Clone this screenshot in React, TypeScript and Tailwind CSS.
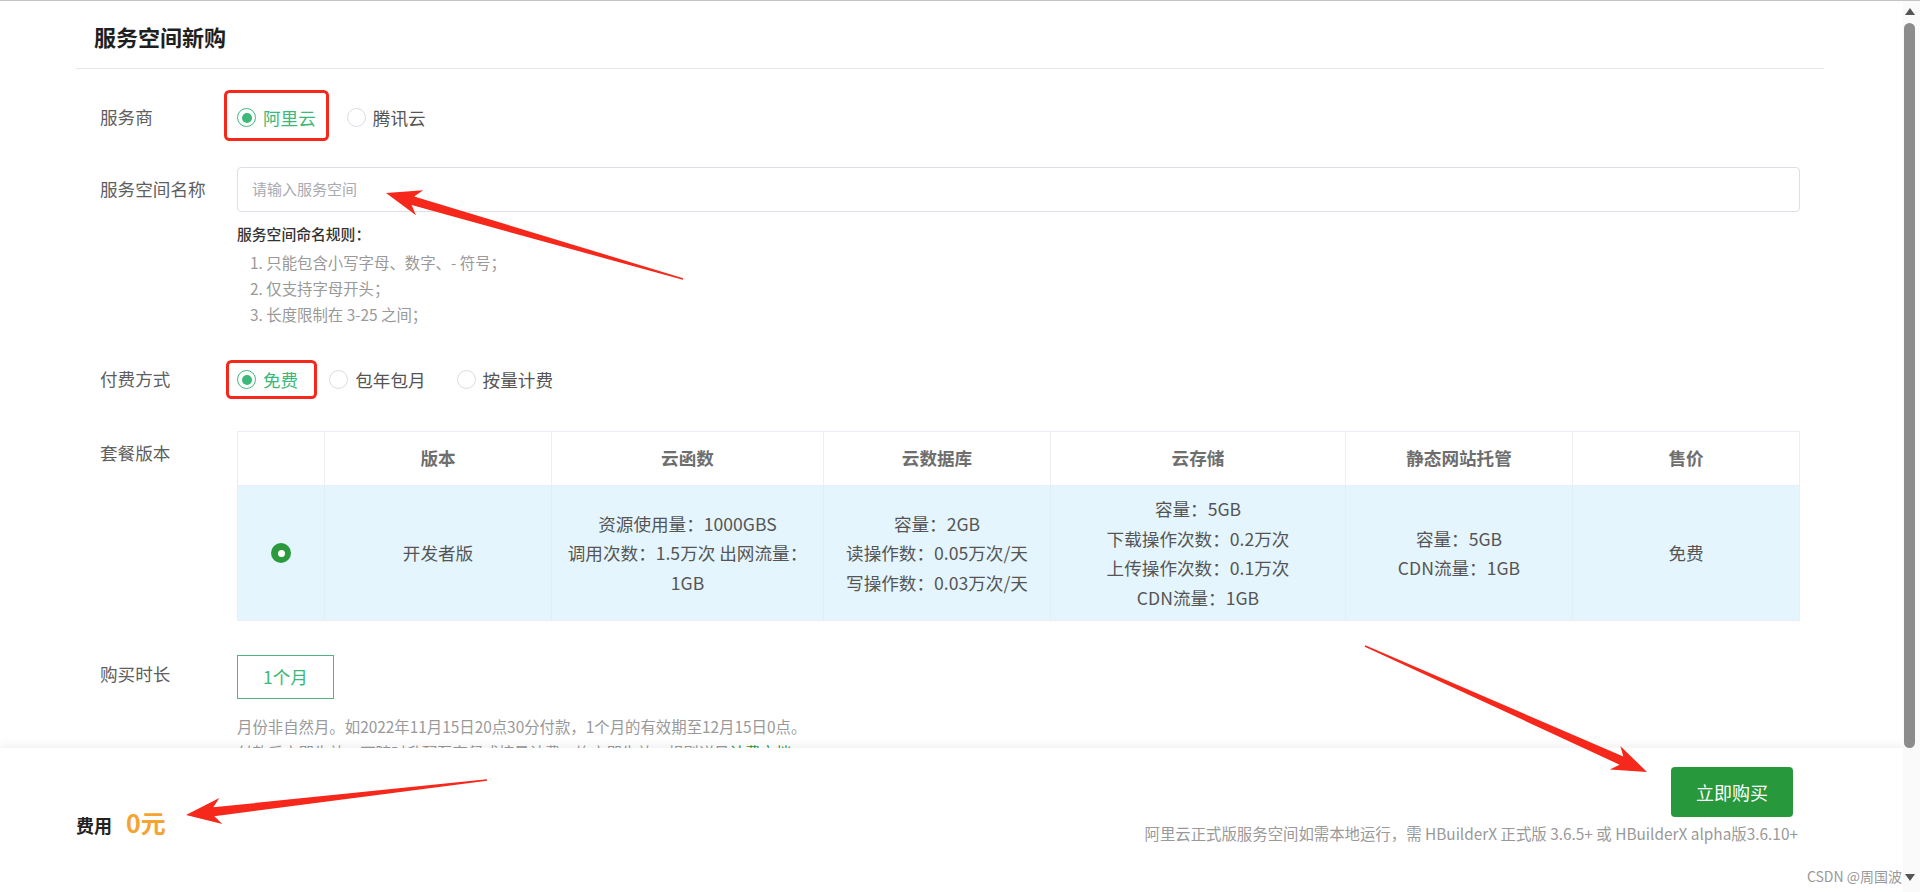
import React from 'react';

type Pt = [number, number];

// red annotation arrow: thin tail, widening shaft, notched head
function arrowPath(tail: Pt, head: Pt, headLen = 35, headW = 13, shaftW = 4.5) {
  const [tx, ty] = tail;
  const [hx, hy] = head;
  const len = Math.hypot(hx - tx, hy - ty);
  const ux = (hx - tx) / len;
  const uy = (hy - ty) / len;
  const nx = -uy;
  const ny = ux;
  const bx = hx - ux * headLen;
  const by = hy - uy * headLen;
  const jx = bx + ux * 7;
  const jy = by + uy * 7;
  const pts: Pt[] = [
    [tx + nx * 0.8, ty + ny * 0.8],
    [jx + nx * shaftW, jy + ny * shaftW],
    [bx + nx * headW, by + ny * headW],
    [hx, hy],
    [bx - nx * headW, by - ny * headW],
    [jx - nx * shaftW, jy - ny * shaftW],
    [tx - nx * 0.8, ty - ny * 0.8],
  ];
  return pts.map((p) => p.map((v) => v.toFixed(1)).join(',')).join(' ');
}

function Radio({ label, checked }: { label: string; checked?: boolean }) {
  return (
    <div className="flex items-center mr-[31px]">
      <span
        className={`flex items-center justify-center w-[19px] h-[19px] rounded-full border ${
          checked ? 'border-[#3cb878]' : 'border-[#d9dce3]'
        }`}
      >
        {checked && <span className="w-[10px] h-[10px] rounded-full bg-[#3cb878]" />}
      </span>
      <span className={`ml-[7px] text-[17.6px] leading-[26px] ${checked ? 'text-[#3cb878]' : 'text-[#555]'}`}>
        {label}
      </span>
    </div>
  );
}

const headers = ['', '版本', '云函数', '云数据库', '云存储', '静态网站托管', '售价'];

const cells: string[][] = [
  ['开发者版'],
  ['资源使用量：1000GBS', '调用次数：1.5万次 出网流量：', '1GB'],
  ['容量：2GB', '读操作数：0.05万次/天', '写操作数：0.03万次/天'],
  ['容量：5GB', '下载操作次数：0.2万次', '上传操作次数：0.1万次', 'CDN流量：1GB'],
  ['容量：5GB', 'CDN流量：1GB'],
  ['免费'],
];

function PlanTable() {
  const cols = 'grid grid-cols-[86px_227px_272px_227px_295px_227px_1fr]';
  return (
    <div className="border border-[#ebeef5]">
      <div className={`${cols} h-[54px] bg-white border-b border-[#ebeef5]`}>
        {headers.map((h, i) => (
          <div
            key={i}
            className={`flex items-center justify-center text-[17.6px] font-bold text-[#6e6e6e] ${
              i > 0 ? 'border-l border-[#ebeef5]' : ''
            }`}
          >
            {h}
          </div>
        ))}
      </div>
      <div className={`${cols} h-[134px] bg-[#e5f5fd]`}>
        <div className="flex items-center justify-center">
          <span className="flex items-center justify-center w-[20px] h-[20px] rounded-full bg-[#2a9a3d]">
            <span className="w-[7px] h-[7px] rounded-full bg-white" />
          </span>
        </div>
        {cells.map((lines, i) => (
          <div
            key={i}
            className="flex flex-col items-center justify-center border-l border-[#e3edf3] text-[17.6px] leading-[29.5px] text-[#555]"
          >
            {lines.map((l, j) => (
              <span key={j}>{l}</span>
            ))}
          </div>
        ))}
      </div>
    </div>
  );
}

export default function App() {
  return (
    <div className="relative flex h-[892px] w-[1920px] overflow-hidden border-t border-[#c4c4c4] bg-white font-['Noto_Sans_CJK_SC',sans-serif]">
      <div className="relative flex-1 overflow-hidden">
        <div className="ml-[76px] mr-[79px]">
          {/* title */}
          <div className="pt-[20px] pb-[17px] pl-[18px] border-b border-[#e8e8e8]">
            <h1 className="text-[22px] leading-[30px] font-bold text-[#1f1f1f]">服务空间新购</h1>
          </div>

          <div className="px-[24px]">
            {/* provider */}
            <div className="flex items-center mt-[30px] h-[37px]">
              <div className="w-[137px] text-[17.6px] text-[#5e5e5e]">服务商</div>
              <div className="flex items-center">
                <Radio label="阿里云" checked />
                <Radio label="腾讯云" />
              </div>
            </div>

            {/* name */}
            <div className="flex mt-[31px]">
              <div className="w-[137px] h-[45px] flex items-center text-[17.6px] text-[#5e5e5e]">服务空间名称</div>
              <div className="flex-1">
                <div className="h-[45px] flex items-center pl-[14px] border border-[#dcdfe6] rounded-[4px] text-[15px] text-[#a8abb2]">
                  请输入服务空间
                </div>
                <div className="mt-[9px] text-[14.8px] leading-[26px] font-medium text-[#333]">服务空间命名规则：</div>
                <div className="mt-[2px] pl-[13px] text-[15.4px] leading-[26px] text-[#999]">
                  <div>1. 只能包含小写字母、数字、- 符号；</div>
                  <div>2. 仅支持字母开头；</div>
                  <div>3. 长度限制在 3-25 之间；</div>
                </div>
              </div>
            </div>

            {/* payment */}
            <div className="flex items-center mt-[34px] h-[37px]">
              <div className="w-[137px] text-[17.6px] text-[#5e5e5e]">付费方式</div>
              <div className="flex items-center">
                <Radio label="免费" checked />
                <Radio label="包年包月" />
                <Radio label="按量计费" />
              </div>
            </div>

            {/* plan */}
            <div className="flex mt-[33px]">
              <div className="w-[137px] h-[44px] flex items-center text-[17.6px] text-[#5e5e5e]">套餐版本</div>
              <div className="flex-1">
                <PlanTable />
              </div>
            </div>

            {/* duration */}
            <div className="flex mt-[34px]">
              <div className="w-[137px] leading-[38px] text-[17.6px] text-[#5e5e5e]">购买时长</div>
              <div className="flex-1">
                <div className="w-[97px] h-[44px] flex items-center justify-center border border-[#4fb47f] text-[17.6px] text-[#3cb878]">
                  1个月
                </div>
                <div className="mt-[14px] text-[15.4px] leading-[26px] text-[#999]">
                  <div>月份非自然月。如2022年11月15日20点30分付款，1个月的有效期至12月15日0点。</div>
                  <div>
                    付款后立即生效，可随时升配至套餐或按量计费，均立即生效，规则详见
                    <span className="text-[#2a9a3d]">计费文档</span>
                  </div>
                </div>
              </div>
            </div>
          </div>
        </div>

        {/* fixed footer */}
        <div className="absolute bottom-0 left-0 right-0 h-[144px] bg-white shadow-[0_-4px_8px_rgba(0,0,0,0.05)] flex justify-between pl-[76px] pr-[105px]">
          <div className="mt-[60px] flex items-baseline leading-[28px]">
            <span className="text-[18px] font-bold text-[#222]">费用</span>
            <span className="ml-[14px] text-[25px] font-bold text-[#f5a331]">0元</span>
          </div>
          <div className="flex flex-col items-end">
            <button className="mt-[19px] mr-[5px] w-[122px] h-[50px] rounded-[4px] bg-[#28983c] text-[18px] text-white">
              立即购买
            </button>
            <div className="mt-[6px] text-[15.4px] leading-[20px] text-[#999]">
              阿里云正式版服务空间如需本地运行，需 HBuilderX 正式版 3.6.5+ 或 HBuilderX alpha版3.6.10+
            </div>
          </div>
        </div>
      </div>

      {/* scrollbar */}
      <div className="flex w-[17px] flex-col bg-[#fafafa]">
        <div className="flex h-[20px] items-center pl-[1px]">
          <span className="ml-[1px] h-0 w-0 border-x-[5px] border-b-[7px] border-x-transparent border-b-[#555]" />
        </div>
        <div className="ml-[1px] mt-[2px] h-[725px] w-[11px] rounded-full bg-[#8c8c8c]" />
        <div className="flex-1" />
        <div className="flex h-[18px] items-start pl-[2px]">
          <span className="h-0 w-0 border-x-[5px] border-t-[7px] border-x-transparent border-t-[#555]" />
        </div>
      </div>

      {/* annotations */}
      <svg className="pointer-events-none absolute inset-0 z-20" width="1920" height="892">
        <rect x="225.5" y="90.5" width="102" height="48" rx="4" fill="none" stroke="#f5281b" strokeWidth="3" />
        <rect x="227.5" y="360.5" width="88" height="36" rx="4" fill="none" stroke="#f5281b" strokeWidth="3" />
        <polygon points={arrowPath([683, 278], [386, 192])} fill="#f5281b" />
        <polygon points={arrowPath([487, 779], [186, 814])} fill="#f5281b" />
        <polygon points={arrowPath([1365, 645], [1647, 771])} fill="#f5281b" />
      </svg>

      <span className="absolute bottom-[6px] right-[18px] z-20 text-[14px] leading-[20px] text-[#999]">CSDN @周国波</span>
    </div>
  );
}
